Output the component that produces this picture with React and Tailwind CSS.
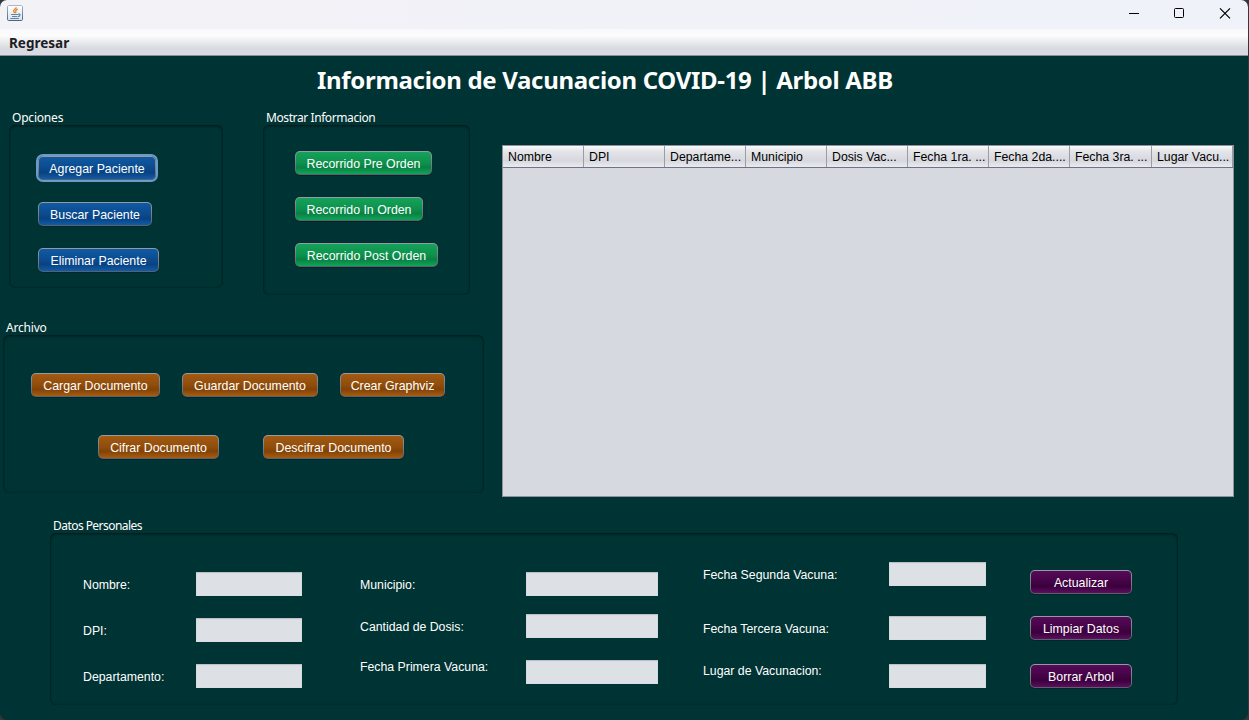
const blue = "bg-[linear-gradient(#105aa3,#0b4b8f_50%,#084280_70%,#0f5cab)]";
const green = "bg-[linear-gradient(#15a25b,#0d914c_50%,#088143_70%,#12a35a)]";
const orange = "bg-[linear-gradient(#a35a12,#904d0b_50%,#824306_70%,#a65c13)]";
const purple = "bg-[linear-gradient(#570a58,#440346_50%,#3a003c_70%,#5d0d60)]";

function Button({ tone, className = "", children }) {
  return (
    <button
      className={`block h-6 shrink-0 whitespace-nowrap rounded-[5px] bg-[linear-gradient(#989ba3,#5b6068)] p-px text-[12.35px] text-white shadow-[0_1px_0_rgba(0,0,0,0.2)] ${className}`}
    >
      <span className={`flex h-full items-center justify-center rounded-[4px] pt-px leading-[18px] ${tone}`}>{children}</span>
    </button>
  );
}

function Group({ title, titleClass = "tracking-[-0.2px]", className = "", boxClass = "", children }) {
  return (
    <section className={className}>
      <h2 className={`h-[15px] whitespace-nowrap pl-[3px] font-['Noto_Sans',sans-serif] text-[12px] leading-[16px] text-white ${titleClass}`}>
        {title}
      </h2>
      <div className={`rounded-[6px] shadow-[inset_0_1px_3px_rgba(0,0,0,0.45),inset_0_0_2px_rgba(0,0,0,0.3)] ${boxClass}`}>
        {children}
      </div>
    </section>
  );
}

function Label({ className = "", children }) {
  return <label className={`block h-4 whitespace-nowrap leading-4 ${className}`}>{children}</label>;
}

function Field({ className = "" }) {
  return (
    <input className={`block h-6 bg-[#dde0e4] shadow-[inset_0_1px_1px_#b9bec4,inset_0_0_1px_#c4c8ce] outline-none ${className}`} />
  );
}

const columns = ["Nombre", "DPI", "Departame...", "Municipio", "Dosis Vac...", "Fecha 1ra. ...", "Fecha 2da....", "Fecha 3ra. ...", "Lugar Vacu..."];

function JavaIcon() {
  return (
    <svg width="16" height="16" viewBox="0 0 16 16" fill="none">
      <defs>
        <linearGradient id="tile" x1="0" y1="0" x2="0" y2="1">
          <stop offset="0" stopColor="#ffffff" />
          <stop offset="1" stopColor="#dce4ea" />
        </linearGradient>
        <linearGradient id="edge" x1="0" y1="0" x2="0" y2="1">
          <stop offset="0" stopColor="#a9b8c4" />
          <stop offset="1" stopColor="#446880" />
        </linearGradient>
      </defs>
      <rect x="0.5" y="0.5" width="15" height="15" rx="1.2" fill="url(#tile)" stroke="url(#edge)" />
      <path d="M9.2 2.2C9.4 4 6.2 4.6 6.6 6.2c.1.7.8 1.1 1.2 1.9M10.8 4.2C9.2 4.8 8.2 5.5 8.8 6.4c.4.6.1 1.2-.4 1.7" stroke="#e8842c" strokeWidth="1.3" />
      <path d="M4 9.5h7M5 11.5h5.2M3.3 13.5h8.6M11 9.2c2.6-.8 2.8 1.8-.2 2.4" stroke="#5c86a8" strokeWidth="1.2" />
    </svg>
  );
}

export default function App() {
  return (
    <div className="h-[720px] w-[1249px] overflow-hidden bg-[#34383a] font-['Liberation_Sans',Arial,sans-serif] text-[12.3px] text-white">
      <div className="flex h-full w-[1248px] flex-col overflow-hidden rounded-[7px] bg-[#003333]">
        <header className="flex h-[29px] shrink-0 items-start justify-between bg-[linear-gradient(90deg,#f3f2f7,#eff2f9)]">
          <div className="pl-[7px] pt-[5px]">
            <JavaIcon />
          </div>
          <svg width="120" height="29" viewBox="0 0 120 29" fill="none" stroke="#000">
            <path d="M1 13.5h10" />
            <rect x="46.5" y="8.5" width="9" height="9" rx="1" />
            <path d="M92 8.3l10 10M102 8.3l-10 10" strokeWidth="1.2" />
          </svg>
        </header>
        <nav className="flex h-[27px] shrink-0 items-center border-b border-[#8b9098] bg-[linear-gradient(#f9f9fb,#fcfcfd_25%,#d8dae0_75%,#d8dbe1)] pl-[9px] pt-px font-['Noto_Sans',sans-serif] text-[13.5px] font-bold leading-[20px] text-[#1c1c24]">
          Regresar
        </nav>
        <h1 className="h-[54px] shrink-0 whitespace-nowrap pl-[317px] pt-[8px] font-['Noto_Sans',sans-serif] text-[24px] font-bold leading-[32px] tracking-[-0.31px]">
          Informacion de Vacunacion COVID-19 | Arbol ABB
        </h1>

        <div className="flex h-[408px] shrink-0">
          <div className="w-[502px] shrink-0">
            <div className="flex h-[210px]">
              <Group title="Opciones" className="ml-[9px] w-[214px]" boxClass="flex h-[163px] flex-col items-start gap-[22px] pl-[29px] pt-[31px]">
                <Button tone={blue} className="w-[118px] outline-2 outline-[#6b9bc9]">Agregar Paciente</Button>
                <Button tone={blue} className="w-[114px]">Buscar Paciente</Button>
                <Button tone={blue} className="w-[121px]">Eliminar Paciente</Button>
              </Group>
              <Group title="Mostrar Informacion" titleClass="tracking-[-0.41px]" className="ml-[40px] w-[207px]" boxClass="flex h-[170px] flex-col items-start gap-[22px] pl-[32px] pt-[26px]">
                <Button tone={green} className="w-[137px]">Recorrido Pre Orden</Button>
                <Button tone={green} className="w-[128px]">Recorrido In Orden</Button>
                <Button tone={green} className="w-[143px]">Recorrido Post Orden</Button>
              </Group>
            </div>
            <Group title="Archivo" className="ml-[3px] w-[481px]" boxClass="h-[158px] pt-[38px]">
              <div className="flex gap-[22px] pl-[28px]">
                <Button tone={orange} className="w-[129px]">Cargar Documento</Button>
                <Button tone={orange} className="w-[136px]">Guardar Documento</Button>
                <Button tone={orange} className="w-[105px]">Crear Graphviz</Button>
              </div>
              <div className="mt-[38px] flex gap-[44px] pl-[95px]">
                <Button tone={orange} className="w-[121px]">Cifrar Documento</Button>
                <Button tone={orange} className="w-[141px]">Descifrar Documento</Button>
              </div>
            </Group>
          </div>

          <div className="mt-[35px] h-[352px] w-[732px] border border-[#8d919c] bg-[#d6d9e0]">
            <div className="flex h-[22px] border-b border-[#6f7480] bg-[linear-gradient(#fbfbfc,#e4e5e9_25%,#d6d8de_70%,#e8ebf1)] text-black">
              {columns.map((c, i) => (
                <div
                  key={c}
                  className={`shrink-0 overflow-hidden whitespace-nowrap border-r border-[#9a9da6] pl-[5px] pt-px leading-[21px] ${i === 7 ? "w-[82px]" : "w-[81px]"}`}
                >
                  {c}
                </div>
              ))}
            </div>
          </div>
        </div>

        <Group title="Datos Personales" titleClass="tracking-[-0.55px]" className="ml-[50px] w-[1128px]" boxClass="flex h-[172px]">
          <div className="w-[113px] shrink-0 pl-[33px] pt-[44px]">
            <Label>Nombre:</Label>
            <Label className="mt-[30px]">DPI:</Label>
            <Label className="mt-[30px]">Departamento:</Label>
          </div>
          <div className="ml-[33px] pt-[39px]">
            <Field className="w-[106px]" />
            <Field className="mt-[22px] w-[106px]" />
            <Field className="mt-[22px] w-[106px]" />
          </div>
          <div className="ml-[58px] w-[166px] pt-[44px]">
            <Label>Municipio:</Label>
            <Label className="mt-[26px]">Cantidad de Dosis:</Label>
            <Label className="mt-[24px]">Fecha Primera Vacuna:</Label>
          </div>
          <div className="pt-[39px]">
            <Field className="w-[132px]" />
            <Field className="mt-[18px] w-[132px]" />
            <Field className="mt-[22px] w-[132px]" />
          </div>
          <div className="ml-[45px] w-[186px] pt-[34px]">
            <Label>Fecha Segunda Vacuna:</Label>
            <Label className="mt-[38px]">Fecha Tercera Vacuna:</Label>
            <Label className="mt-[26px]">Lugar de Vacunacion:</Label>
          </div>
          <div className="pt-[29px]">
            <Field className="w-[97px]" />
            <Field className="mt-[30px] w-[97px]" />
            <Field className="mt-[24px] w-[97px]" />
          </div>
          <div className="ml-[44px] pt-[37px]">
            <Button tone={purple} className="w-[102px]">Actualizar</Button>
            <Button tone={purple} className="mt-[22px] w-[102px]">Limpiar Datos</Button>
            <Button tone={purple} className="mt-[24px] w-[102px]">Borrar Arbol</Button>
          </div>
        </Group>
      </div>
    </div>
  );
}
